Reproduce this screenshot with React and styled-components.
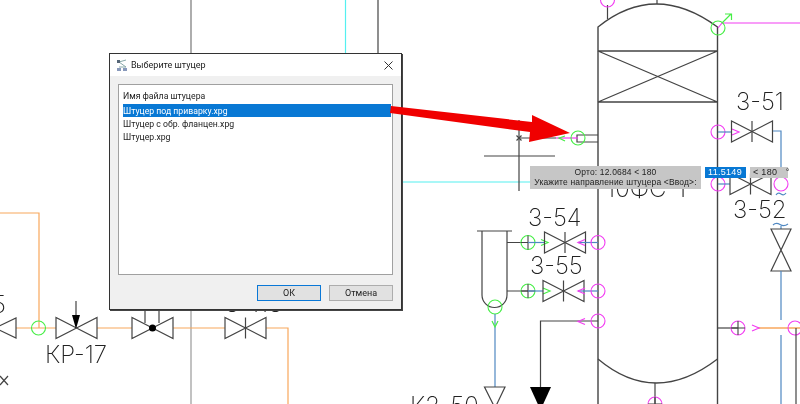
import React from "react";
import styled, { createGlobalStyle } from "styled-components";

const Global = createGlobalStyle`
  html, body { margin: 0; padding: 0; background: #fff; overflow: hidden; }
  #root { width: 800px; height: 404px; }
`;

const Desk = styled.div`
  position: relative;
  width: 800px;
  height: 404px;
  overflow: hidden;
  background: #fff;
  filter: blur(0.3px);
  font-family: "Roboto", "Liberation Sans", sans-serif;
`;
const Sheet = styled.svg`
  display: block;
  width: 800px;
  height: 404px;
`;
const Overlay = styled.svg`
  position: absolute;
  left: 0;
  top: 0;
  width: 800px;
  height: 404px;
  pointer-events: none;
`;
const Label = styled.text`
  font-family: "Inter", "Liberation Sans", sans-serif;
  font-weight: 200;
  font-size: 24px;
  fill: #222;
`;

const Window = styled.div`
  position: absolute;
  left: 109px;
  top: 53px;
  width: 291px;
  height: 255px;
  display: flex;
  flex-direction: column;
  background: #f0f0f0;
  border: 1px solid #333;
  box-shadow: 1px 1px 0 #444;
`;
const TitleBar = styled.div`
  height: 22px;
  display: flex;
  align-items: center;
  gap: 3px;
  padding: 0 8px 0 6px;
  background: #fff;
  font-size: 9px;
  color: #222;
`;
const TitleText = styled.span`
  flex: 1;
`;
const Body = styled.div`
  flex: 1;
  display: flex;
  flex-direction: column;
  padding: 8px;
`;
const FileList = styled.div`
  height: 191px;
  box-sizing: border-box;
  background: #fff;
  border: 1px solid #a0a0a0;
  padding: 5px 1px 0 4px;
  font-size: 8.7px;
  color: #222;
`;
const ListHead = styled.div`
  height: 13px;
  line-height: 12px;
  margin-bottom: 1px;
`;
const ListRow = styled.div`
  height: 13px;
  line-height: 14px;
  box-sizing: border-box;
  background: ${(p) => (p.$active ? "#0878d4" : "transparent")};
  color: ${(p) => (p.$active ? "#fff" : "#222")};
`;
const Actions = styled.div`
  margin-top: 10px;
  display: flex;
  justify-content: flex-end;
  gap: 8px;
`;
const Btn = styled.button`
  width: 64px;
  height: 16px;
  box-sizing: border-box;
  padding: 0;
  font: inherit;
  font-size: 9px;
  color: #222;
  background: #e1e1e1;
  border: 1px solid ${(p) => (p.$primary ? "#0a78d7" : "#adadad")};
`;

const Tip = styled.div`
  position: absolute;
  left: 530px;
  top: 166px;
  width: 171px;
  height: 23px;
  background: #c6c6c6;
  text-align: center;
  font-family: "Liberation Sans", sans-serif;
  font-size: 8.5px;
  letter-spacing: 0.15px;
  line-height: 10px;
  padding-top: 1px;
  box-sizing: border-box;
  color: #222;
  white-space: nowrap;
`;
const Chip = styled.div`
  position: absolute;
  top: 167px;
  height: 11px;
  line-height: 11px;
  box-sizing: border-box;
  padding-left: 3px;
  font-family: "Liberation Sans", sans-serif;
  font-size: 9px;
  letter-spacing: 0.3px;
  white-space: pre;
  left: ${(p) => p.$x}px;
  width: ${(p) => p.$w}px;
  background: ${(p) => (p.$on ? "#0878d4" : "#c6c6c6")};
  color: ${(p) => (p.$on ? "#fff" : "#222")};
`;

const GREY = "#444";
const OR = "#f8a75c";
const BL = "#4f88c2";
const MG = "#f23df2";
const GN = "#46ee46";
const CY = "#55f0f0";

const L = ({ d, c = GREY, w = 1.2 }) => <path d={d} fill="none" stroke={c} strokeWidth={w} />;
const Ring = ({ x, y, c, cross }) => (
  <g fill="none" stroke={c} strokeWidth="1.1">
    <circle cx={x} cy={y} r="7" />
    {cross && <path d={`M${x} ${y - 7}V${y + 7}M${x - 7} ${y}H${x + 7}`} stroke={GREY} />}
  </g>
);
const Valve = ({ x, y, r = 20.5, h = 10.5, stem }) => (
  <g fill="none" stroke={GREY} strokeWidth="1.2">
    <path d={`M${x} ${y}L${x - r} ${y - h}V${y + h}ZM${x} ${y}L${x + r} ${y - h}V${y + h}Z`} />
    {stem && <path d={`M${x} ${y - h}V${y + h}`} />}
  </g>
);
const RightChev = ({ x, y, c }) => <L d={`M${x} ${y - 3}L${x + 7} ${y}L${x} ${y + 3}`} c={c} />;
const LeftChev = ({ x, y, c }) => <L d={`M${x + 7} ${y - 3}L${x} ${y}L${x + 7} ${y + 3}`} c={c} />;

const Drawing = () => (
  <Sheet viewBox="0 0 800 404">
    <L d="M191 0V53" c="#777" />
    <L d="M191 310V404" c="#999" />
    <L d="M378 0V53" />
    <L d="M345.5 0V53" c={CY} />
    <L d="M402 182H530" c={CY} />
    <L d="M0 213H39V328" c={OR} />

    {/* lower-left line */}
    <L d="M16 328H56M97 328H132M173 328H225M266 328H288V404" c={OR} />
    <Ring x={38.5} y={328} c={GN} />
    <path d="M16 318V338L-5 328Z" fill="none" stroke={GREY} strokeWidth="1.2" />
    <Valve x={76.5} y={328} />
    <L d="M76 301V315" />
    <path d="M72 315H80L76 329Z" fill="#000" />
    <Valve x={152.5} y={328} />
    <L d="M145 310V323M159 310V323" />
    <circle cx="152.5" cy="328" r="3.5" fill="#000" />
    <Valve x={245.5} y={328} stem />
    <L d="M0 376L8 385M0 385L8 376" />
    <Label x="-8" y="313">5</Label>
    <Label x="45" y="363">КР-17</Label>
    <Label x="225" y="312">3-113</Label>

    {/* column */}
    <L d="M598 404V27Q655 -19 717.5 27V404" w={1.4} />
    <L d="M598 51H717.5M598 102H717.5M598 51L717.5 102M598 102L717.5 51" w={1.3} />
    <L d="M657 0V4M607.5 5V19" />
    <Ring x={607.5} y={0} c={MG} />
    <L d="M722 23H800" c={MG} />
    <L d="M718 28L722 23" c={MG} />
    <Ring x={718} y={28} c={GN} />
    <L d="M722 23L731 14M725 14H731.5V20" c={GN} />
    <L d="M598 359Q655 407 717.5 359" w={1.3} />
    <L d="M655 383V404" />
    <Ring x={655} y={404} c={MG} cross />

    {/* nozzle + cursor */}
    <L d="M598 135H577V142H598" />
    <L d="M556 138H578" c={MG} />
    <L d="M565 136L559 138L565 141" c={GN} />
    <Ring x={578} y={138} c={GN} />
    <L d="M519 120V191M484 156H555M519 138H556" />
    <L d="M516.5 135.5L521.5 140.5M516.5 140.5L521.5 135.5" />

    {/* right valves */}
    <Label x="736" y="110">3-51</Label>
    <Ring x={718} y={132} c={MG} />
    <L d="M718 132H731" c={BL} />
    <RightChev x={732} y={132} c={MG} />
    <Valve x={752} y={131.5} stem />
    <L d="M773 131H781V177" c={BL} />
    <Ring x={718} y={184} c={MG} />
    <L d="M718 184H730" c={BL} />
    <Valve x={750.5} y={184} stem />
    <Ring x={781} y={184} c={MG} />
    <L d="M776 195Q778 192 781 194T786 193" c={BL} />
    <Label x="733" y="218">3-52</Label>
    <Label x="606" y="197">10ФС-1</Label>
    <L d="M773 225Q776 222 780 224.5T788 224" c={BL} />
    <L d="M781 226V229" c={BL} />
    <path d="M771 229H791L771 271H791Z" fill="none" stroke={GREY} strokeWidth="1.2" />
    <L d="M781 271V320M781 335V404" c={BL} />
    <L d="M758 328H800" c={OR} w={1.6} />
    <L d="M718 328H738" />
    <Ring x={738} y={328} c={MG} cross />
    <RightChev x={752} y={328} c={MG} />
    <Ring x={795} y={328} c={MG} />
    <L d="M796 328V404" />

    {/* left vessel */}
    <L d="M477 231H512M482 231V295A12.5 12.5 0 0 0 507 295V231" />
    <L d="M507 242.5H528M507 291H528" />
    <Ring x={495} y={307} c={GN} />
    <L d="M495 314V387" c={BL} />
    <L d="M492 321L495 327L498 321" c={GN} />
    <path d="M484.5 387H505L495 408Z" fill="none" stroke={GREY} strokeWidth="1.2" />
    <Label x="528" y="226">3-54</Label>
    <Ring x={528} y={242.5} c={GN} cross />
    <L d="M528 242.5H545" c={BL} />
    <RightChev x={541} y={242.5} c={GN} />
    <Valve x={565} y={242.5} stem />
    <L d="M578 242.5H598" c={BL} />
    <LeftChev x={578} y={242.5} c={MG} />
    <Ring x={598} y={242.5} c={MG} />
    <Label x="530" y="274">3-55</Label>
    <Ring x={528} y={291} c={GN} cross />
    <L d="M528 291H543" c={BL} />
    <RightChev x={543} y={291} c={GN} />
    <Valve x={563.5} y={291} stem />
    <L d="M578 291H598" c={BL} />
    <LeftChev x={578} y={291} c={MG} />
    <Ring x={598} y={291} c={MG} />
    <L d="M598 321H540.5V387" />
    <LeftChev x={578} y={321.5} c={MG} />
    <Ring x={598} y={321} c={MG} />
    <path d="M530 387H551L540.5 410Z" fill="#000" />
    <Label x="410" y="414">К3-50</Label>
  </Sheet>
);

const AppGlyph = () => (
  <svg width="12" height="13" viewBox="0 0 12 13">
    <path d="M3 3L10 1M3 3L10 8M3 8H10" stroke="#8aa" fill="none" />
    <rect x="1" y="1" width="3" height="3" fill="#567" />
    <rect x="1" y="9" width="4" height="3" fill="#89b" />
    <rect x="7" y="9" width="4" height="3" fill="#89b" />
  </svg>
);
const CloseGlyph = () => (
  <svg width="9" height="9" viewBox="0 0 9 9">
    <path d="M.5 .5L8.5 8.5M8.5 .5L.5 8.5" stroke="#333" fill="none" />
  </svg>
);

export default function App() {
  return (
    <Desk>
      <Global />
      <Drawing />
      <Tip>
        <div>Орто: 12.0684 &lt; 180</div>
        <div>Укажите направление штуцера &lt;Ввод&gt;:</div>
      </Tip>
      <Chip $x={705} $w={41} $on>11.5149</Chip>
      <Chip $x={750} $w={38}>{"< 180   °"}</Chip>
      <Window>
        <TitleBar>
          <AppGlyph />
          <TitleText>Выберите штуцер</TitleText>
          <CloseGlyph />
        </TitleBar>
        <Body>
          <FileList>
            <ListHead>Имя файла штуцера</ListHead>
            <ListRow $active>Штуцер под приварку.xpg</ListRow>
            <ListRow>Штуцер с обр. фланцен.xpg</ListRow>
            <ListRow>Штуцер.xpg</ListRow>
          </FileList>
          <Actions>
            <Btn $primary>ОК</Btn>
            <Btn>Отмена</Btn>
          </Actions>
        </Body>
      </Window>
      <Overlay viewBox="0 0 800 404">
        <path d="M391 106L532 122L532 115L570 133L529 142L530 132L390 113Z" fill="#f00000" />
      </Overlay>
    </Desk>
  );
}
